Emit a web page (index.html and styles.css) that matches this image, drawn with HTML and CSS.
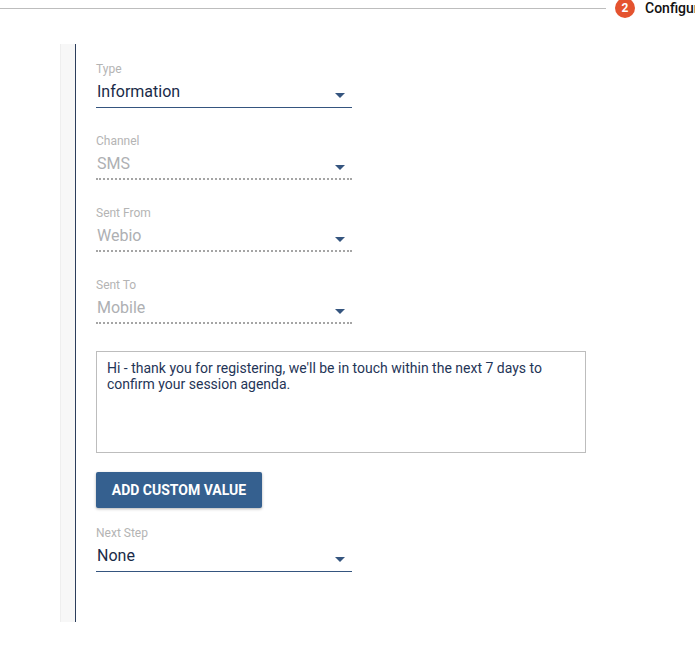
FILE: index.html
```html
<!DOCTYPE html>
<html lang="en">
<head>
    <meta charset="UTF-8">
    <meta name="viewport" content="width=device-width, initial-scale=1.0">
    <title>Configure</title>
    <link rel="stylesheet" href="styles.css">
</head>
<body>
    <div class="stepper">
        <div class="stepper-line"></div>
        <div class="step-num">2</div>
        <div class="step-label">Configure</div>
    </div>

    <div class="panel">
        <div class="panel-inner">
            <div class="field">
                <div class="field-label">Type</div>
                <div class="field-value">Information<span class="caret"></span></div>
            </div>
            <div class="field disabled">
                <div class="field-label">Channel</div>
                <div class="field-value">SMS<span class="caret"></span></div>
            </div>
            <div class="field disabled">
                <div class="field-label">Sent From</div>
                <div class="field-value">Webio<span class="caret"></span></div>
            </div>
            <div class="field disabled">
                <div class="field-label">Sent To</div>
                <div class="field-value">Mobile<span class="caret"></span></div>
            </div>
            <div class="message">Hi - thank you for registering, we'll be in touch within the next 7 days to confirm your session agenda.</div>
            <button class="add-btn">ADD CUSTOM VALUE</button>
            <div class="field">
                <div class="field-label">Next Step</div>
                <div class="field-value">None<span class="caret"></span></div>
            </div>
        </div>
    </div>
</body>
</html>
```

FILE: styles.css
```css
html, body {
    margin: 0;
    padding: 0;
}
body {
    width: 695px;
    height: 658px;
    overflow: hidden;
    background: #fff;
    font-family: Roboto, Arial, sans-serif;
    color: #1a2b48;
}
.stepper {
    display: flex;
    align-items: center;
    height: 16px;
    white-space: nowrap;
    overflow: visible;
}
.stepper-line {
    width: 606px;
    flex: none;
    height: 1px;
    background: #bdbdbd;
}
.step-num {
    flex: none;
    width: 20px;
    height: 20px;
    margin-left: 9px;
    border-radius: 50%;
    background: #e4532f;
    color: #fff;
    font-size: 12px;
    font-weight: 700;
    line-height: 20px;
    text-align: center;
}
.step-label {
    flex: none;
    margin-left: 10px;
    font-size: 14px;
    font-weight: 500;
    color: #111;
}
.panel {
    margin: 28px 0 0 60px;
    width: 14px;
    height: 578px;
    background: #f7f7f7;
    border-left: 1px solid #eee;
    border-right: 1px solid #2c3e5c;
}
.panel-inner {
    width: 490px;
    padding: 18px 0 0 21px;
    margin-left: 14px;
}
.field {
    width: 256px;
    height: 72px;
}
.field-label {
    font-size: 12px;
    line-height: 14px;
    color: #b4b4b4;
}
.field-value {
    position: relative;
    height: 31px;
    padding-left: 1px;
    line-height: 32px;
    font-size: 16px;
    color: #1a2b48;
    border-bottom: 1px solid #35557f;
}
.disabled .field-value {
    height: 30px;
    color: #aeb0b3;
    border-bottom: 2px dotted #a5a5a5;
}
.caret {
    position: absolute;
    right: 7px;
    top: 17px;
    width: 0;
    height: 0;
    border-left: 5px solid transparent;
    border-right: 5px solid transparent;
    border-top: 5px solid #35557f;
}
.message {
    width: 490px;
    height: 102px;
    box-sizing: border-box;
    margin-top: 1px;
    padding: 8px 10px;
    border: 1px solid #bdbdbd;
    font-size: 14px;
    line-height: 16px;
    color: #1f3557;
}
.add-btn {
    display: block;
    width: 166px;
    height: 36px;
    margin: 19px 0 18px;
    padding: 0;
    border: none;
    border-radius: 2px;
    background: #35608f;
    color: #fff;
    font-family: Roboto, Arial, sans-serif;
    font-size: 14px;
    font-weight: 700;
    box-shadow: 0 1px 3px rgba(0, 0, 0, 0.3);
}
```
